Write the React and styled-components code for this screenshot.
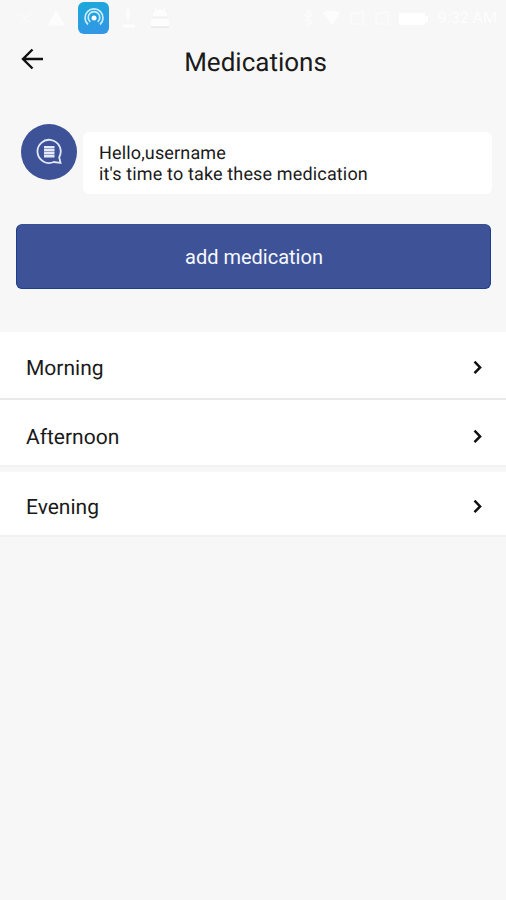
import React from "react";
import styled, { createGlobalStyle } from "styled-components";

const GlobalStyle = createGlobalStyle`
  *, *::before, *::after { box-sizing: border-box; }
  body {
    margin: 0;
    background: #f7f7f7;
    color: #1a1a1a;
    font-family: Roboto, "Liberation Sans", sans-serif;
    text-rendering: geometricPrecision;
  }
`;

const Screen = styled.main`
  display: flex;
  flex-direction: column;
  width: 506px;
  height: 900px;
  overflow: hidden;
  background: #f7f7f7;
`;

const StatusBar = styled.div`
  display: flex;
  align-items: center;
  justify-content: space-between;
  height: 36px;
  padding: 0 9px 0 15px;
  color: #fdfdfd;
`;

const StatusGroup = styled.div`
  display: flex;
  align-items: center;
  gap: ${(p) => p.$gap}px;
`;

const StatusIcon = styled.svg`
  display: block;
  flex: none;
  fill: none;
  stroke: currentColor;
  stroke-width: 1.5;
`;

const AppTile = styled.div`
  display: grid;
  place-items: center;
  width: 31px;
  height: 32px;
  border-radius: 6px;
  background: linear-gradient(165deg, #1ba9da, #3595e6);
`;

const Clock = styled.span`
  color: #fdfdfd;
  font-size: 16px;
  line-height: 20px;
`;

const Header = styled.header`
  display: grid;
  grid-template-columns: 64px 1fr 64px;
  height: 52px;
`;

const BackButton = styled.button`
  display: flex;
  align-items: center;
  justify-content: center;
  height: 46px;
  padding: 0;
  border: 0;
  background: none;
  color: #111;
`;

const Title = styled.h1`
  margin: 0;
  padding-left: 5px;
  font-size: 26px;
  font-weight: 400;
  line-height: 55px;
  text-align: center;
`;

const Greeting = styled.section`
  display: flex;
  gap: 6px;
  margin-top: 36px;
  padding: 0 14px 0 21px;
`;

const Avatar = styled.div`
  display: grid;
  place-items: center;
  flex: none;
  width: 56px;
  height: 56px;
  border-radius: 50%;
  background: #3d5297;
`;

const Bubble = styled.p`
  flex: 1;
  height: 62px;
  margin: 8px 0 0;
  padding: 11px 16px 9px;
  border-radius: 6px;
  background: #fff;
  font-size: 18px;
  line-height: 21px;
  letter-spacing: 0.15px;
`;

const AddButton = styled.button`
  height: 65px;
  margin: 30px 15px 0 16px;
  padding: 0 0 0 1px;
  border: 1px solid #1c3d8b;
  border-top-color: #3c5091;
  border-radius: 6px;
  background: #3e5397;
  color: #f6f8ff;
  font: 400 20px/24px Roboto, sans-serif;
`;

const PeriodList = styled.ul`
  margin: 43px 0 0;
  padding: 0;
  list-style: none;
`;

const PeriodRow = styled.li`
  display: flex;
  align-items: center;
  justify-content: space-between;
  height: ${(p) => p.$height}px;
  margin-bottom: ${(p) => p.$gap}px;
  padding: ${(p) => p.$shift}px 21px 0 26px;
  border-bottom: 2px solid ${(p) => p.$line};
  background: #fff;
`;

const PeriodName = styled.span`
  padding-top: 2px;
  font-size: 21px;
  line-height: 24px;
`;

const periods = [
  { name: "Morning", height: 68, gap: 0, shift: 6, line: "#e9e9e9" },
  { name: "Afternoon", height: 67, gap: 5, shift: 8, line: "#f2f2f2" },
  { name: "Evening", height: 65, gap: 0, shift: 6, line: "#f1f1f1" },
];

function Chevron() {
  return (
    <svg width="14" height="16" viewBox="0 0 14 16" fill="none" stroke="#111" strokeWidth="2.5">
      <path d="M3.5 1.6 9.1 7.4l-5.6 5.8" />
    </svg>
  );
}

export default function App() {
  return (
    <>
      <GlobalStyle />
      <Screen>
        <StatusBar>
          <StatusGroup $gap={13}>
            <StatusIcon width="20" height="18" viewBox="0 0 20 18" opacity="0.6">
              <path d="M2 6h5l3 3 7-5M4 14l5-4 7 4" />
            </StatusIcon>
            <StatusIcon width="17" height="18" viewBox="0 0 17 18">
              <path d="m1 16 7-13 8 13Z" fill="currentColor" />
            </StatusIcon>
            <AppTile>
              <svg width="22" height="22" viewBox="0 0 22 22" fill="none" stroke="#c9edff" strokeWidth="1.7">
                <path d="M5 17.5a9 9 0 1 1 12 0M7.3 14.9a5.8 5.8 0 1 1 7.4 0" />
                <circle cx="11" cy="11" r="2.5" fill="#fff" stroke="none" />
              </svg>
            </AppTile>
            <StatusIcon width="14" height="22" viewBox="0 0 14 22">
              <path d="M6 2v11M1 19h12" strokeWidth="3" />
            </StatusIcon>
            <StatusIcon width="22" height="24" viewBox="0 0 22 24">
              <path d="M4 10a7 6.5 0 0 1 14 0ZM2 13h18v7H2Z" fill="currentColor" stroke="none" />
              <path d="m6 2 2 3M16 2l-2 3" />
              <path d="M2 21.2h18" stroke="#e9e9e9" />
              <path d="M3 11.2h16" stroke="#f0f0f0" strokeWidth="1" />
            </StatusIcon>
          </StatusGroup>
          <StatusGroup $gap={9}>
            <StatusIcon width="12" height="18" viewBox="0 0 12 18" opacity="0.8">
              <path d="m2 5 8 8-4 4V1l4 4-8 8" />
            </StatusIcon>
            <StatusIcon width="17" height="16" viewBox="0 0 17 16">
              <path d="M1 3q8-4 15 0L9 14Z" fill="currentColor" />
            </StatusIcon>
            <StatusIcon width="16" height="16" viewBox="0 0 16 16" opacity="0.8">
              <path d="M2 14V4l12-2v12Z" />
            </StatusIcon>
            <StatusIcon width="16" height="16" viewBox="0 0 16 16" opacity="0.8">
              <path d="M2 14V4l12-2v12Z" />
            </StatusIcon>
            <StatusIcon width="30" height="14" viewBox="0 0 30 14">
              <path d="M0 2h26v3h3v6h-3v3H0Z" fill="#fff" stroke="none" />
            </StatusIcon>
            <Clock>9:32 AM</Clock>
          </StatusGroup>
        </StatusBar>
        <Header>
          <BackButton aria-label="Back">
            <svg width="24" height="24" viewBox="0 0 24 24" fill="none" stroke="currentColor" strokeWidth="2.4">
              <path d="M23 12H3M12.5 2.5 3 12l9.5 9.5" />
            </svg>
          </BackButton>
          <Title>Medications</Title>
        </Header>
        <Greeting>
          <Avatar>
            <svg width="28" height="28" viewBox="0 0 28 28" fill="none" stroke="#e3e9fb" strokeWidth="1.8">
              <path d="M25.5 24.9 18.8 24A11.6 11.6 0 1 1 24.2 19.1Z" />
              <path d="M9 9.2h10.5M9 12.2h10.5M9 15.2h10.5M9 18.2h10.5" strokeWidth="2.5" />
            </svg>
          </Avatar>
          <Bubble>
            Hello,username
            <br />
            it's time to take these medication
          </Bubble>
        </Greeting>
        <AddButton>add medication</AddButton>
        <PeriodList>
          {periods.map((p) => (
            <PeriodRow key={p.name} $height={p.height} $gap={p.gap} $shift={p.shift} $line={p.line}>
              <PeriodName>{p.name}</PeriodName>
              <Chevron />
            </PeriodRow>
          ))}
        </PeriodList>
      </Screen>
    </>
  );
}
